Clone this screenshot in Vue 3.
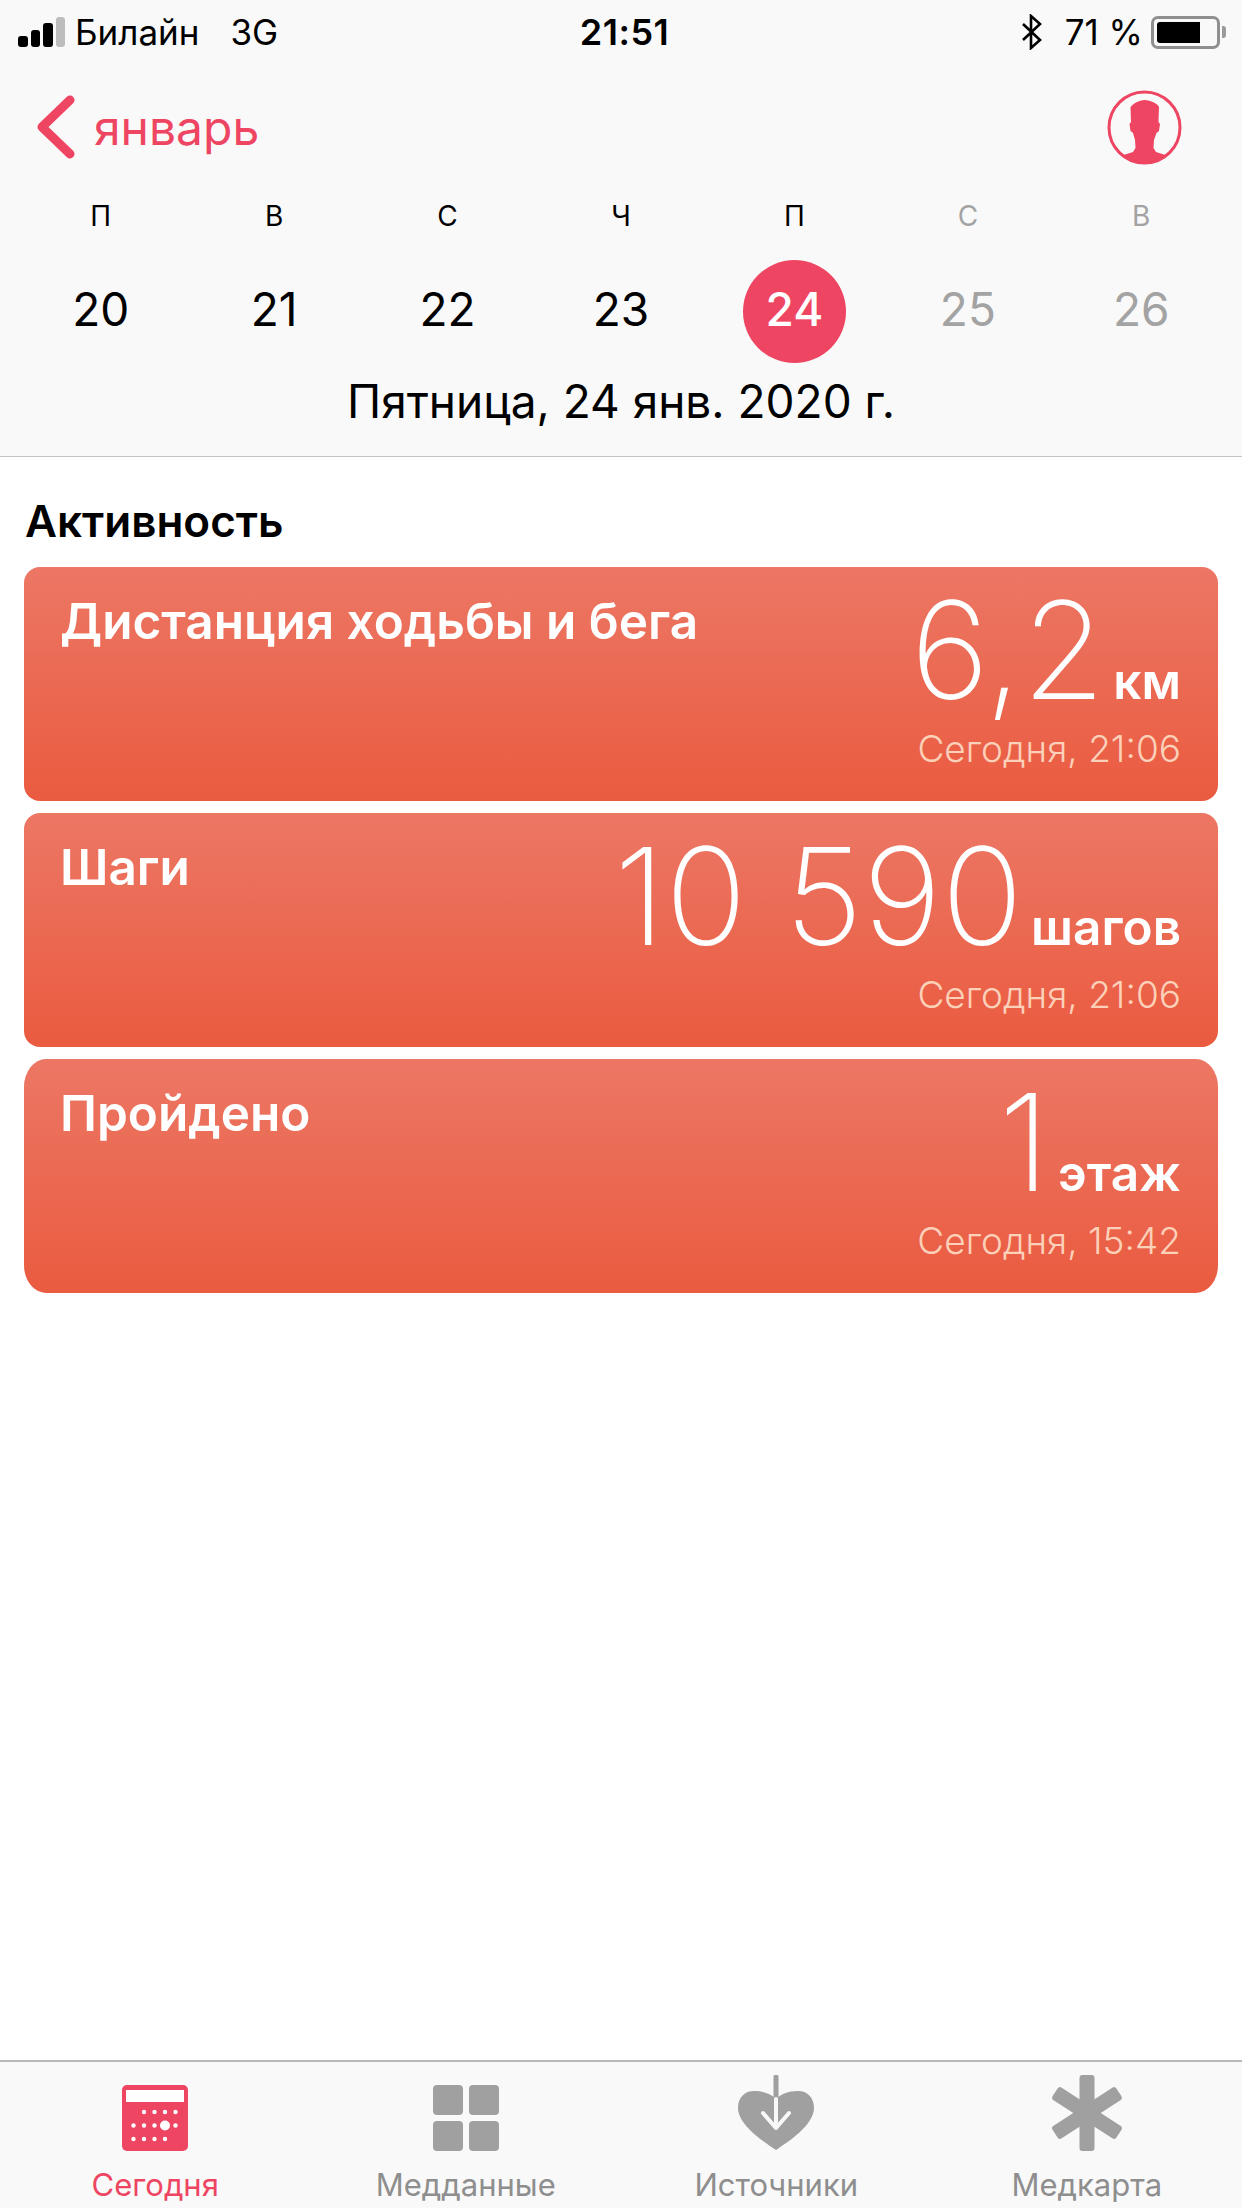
<script setup>
const week = [
  { letter: 'П', day: 20 },
  { letter: 'В', day: 21 },
  { letter: 'С', day: 22 },
  { letter: 'Ч', day: 23 },
  { letter: 'П', day: 24, today: true },
  { letter: 'С', day: 25, off: true },
  { letter: 'В', day: 26, off: true }
]

const cards = [
  { title: 'Дистанция ходьбы и бега', value: '6,2', unit: 'км', time: 'Сегодня, 21:06' },
  { title: 'Шаги', value: '10 590', unit: 'шагов', time: 'Сегодня, 21:06' },
  { title: 'Пройдено', value: '1', unit: 'этаж', time: 'Сегодня, 15:42' }
]

const dots = [
  { x: 22, y: 27 }, { x: 32.5, y: 27 }, { x: 43, y: 27 }, { x: 53.5, y: 27 },
  { x: 11.5, y: 40.5 }, { x: 22, y: 40.5 }, { x: 32.5, y: 40.5 }, { x: 53.5, y: 40.5 },
  { x: 11.5, y: 54 }, { x: 22, y: 54 }, { x: 32.5, y: 54 }, { x: 43, y: 54 }
]
</script>

<template>
  <div class="screen">
    <header class="top">
      <div class="status">
        <div class="status-left">
          <div class="signal">
            <i class="b1"></i><i class="b2"></i><i class="b3"></i><i class="b4"></i>
          </div>
          <span class="carrier">Билайн</span>
          <span class="net">3G</span>
        </div>
        <div class="clock">21:51</div>
        <div class="status-right">
          <svg class="bt" width="22" height="36" viewBox="0 0 22 36">
            <path d="M2 10 L19 26 L10 34 V2 L19 10 L2 26" fill="none" stroke="#000" stroke-width="2.6" />
          </svg>
          <span class="pct">71 %</span>
          <div class="battery"><div class="level"></div></div>
          <div class="tip"></div>
        </div>
      </div>

      <div class="nav">
        <div class="back">
          <svg width="40" height="64" viewBox="0 0 40 64">
            <path d="M34 5 L6 32 L34 59" fill="none" stroke="#ee4562" stroke-width="9" stroke-linecap="round" stroke-linejoin="round" />
          </svg>
          <span>январь</span>
        </div>
        <svg class="avatar" width="75" height="75" viewBox="0 0 75 75">
          <defs>
            <clipPath id="ring"><circle cx="37.5" cy="37.5" r="36" /></clipPath>
          </defs>
          <path clip-path="url(#ring)" fill="#ee4562" d="M37.5 10 C33 10.5 29 12 26 14.5 L23.5 17 L24 32 L22.5 34 L23.5 41 L26 43 L28 50 L28.5 58 L26 62 L15 65.5 L15 80 L60 80 L60 65.5 L49 62 L46.5 58 L47 50 L49.5 43 L52 41 L53 34 L51.5 32 L52 17 C50 13 44 10.5 37.5 10 Z" />
          <circle cx="37.5" cy="37.5" r="35.5" fill="none" stroke="#ee4562" stroke-width="3" />
        </svg>
      </div>

      <div class="week">
        <div v-for="d in week" :key="d.day" class="col" :class="{ off: d.off }">
          <div class="letter">{{ d.letter }}</div>
          <div class="day" :class="{ today: d.today }">{{ d.day }}</div>
        </div>
      </div>
      <div class="date">Пятница, 24 янв. 2020 г.</div>
    </header>

    <main class="content">
      <h2>Активность</h2>
      <div class="cards">
        <section v-for="c in cards" :key="c.title" class="card">
          <div class="card-title">{{ c.title }}</div>
          <div class="card-right">
            <div class="reading">
              <span class="value">{{ c.value }}</span>
              <span class="unit">{{ c.unit }}</span>
            </div>
            <div class="time">{{ c.time }}</div>
          </div>
        </section>
      </div>
    </main>

    <footer class="tabs">
      <div class="tab active">
        <div class="icon">
          <svg width="66" height="66" viewBox="0 0 66 66">
            <rect width="66" height="66" rx="5" fill="#ee4562" />
            <rect x="4" y="5" width="58" height="12" fill="#fff" />
            <circle v-for="(p, i) in dots" :key="i" :cx="p.x" :cy="p.y" r="2.2" fill="#fff" />
            <circle cx="43" cy="40.5" r="5" fill="#fff" />
          </svg>
        </div>
        <span>Сегодня</span>
      </div>
      <div class="tab">
        <div class="icon">
          <svg width="66" height="66" viewBox="0 0 66 66" fill="#a0a0a0">
            <rect width="30" height="30" rx="4" />
            <rect x="36" width="30" height="30" rx="4" />
            <rect y="36" width="30" height="30" rx="4" />
            <rect x="36" y="36" width="30" height="30" rx="4" />
          </svg>
        </div>
        <span>Медданные</span>
      </div>
      <div class="tab">
        <div class="icon">
          <svg width="76" height="76" viewBox="0 0 76 76">
            <path fill="#a0a0a0" d="M38 75 C26 67 0 50 0 33 C0 22 7 16 16 16 C26 16 33 19 38 24 C43 19 50 16 60 16 C69 16 76 22 76 33 C76 50 50 67 38 75 Z" />
            <path d="M38 2 V22" stroke="#a0a0a0" stroke-width="5" stroke-linecap="round" />
            <path d="M38 24 V52 M25 38 L38 53 L51 38" fill="none" stroke="#f9f9f9" stroke-width="4" stroke-linecap="round" stroke-linejoin="round" />
          </svg>
        </div>
        <span>Источники</span>
      </div>
      <div class="tab">
        <div class="icon">
          <svg width="72" height="76" viewBox="0 0 72 76" fill="#a0a0a0">
            <rect x="28.5" width="15" height="76" rx="3" />
            <rect x="28.5" width="15" height="76" rx="3" transform="rotate(57 36 38)" />
            <rect x="28.5" width="15" height="76" rx="3" transform="rotate(-57 36 38)" />
          </svg>
        </div>
        <span>Медкарта</span>
      </div>
    </footer>
  </div>
</template>

<style scoped>
.screen {
  width: 1242px;
  height: 2208px;
  display: flex;
  flex-direction: column;
  overflow: hidden;
  background: #fff;
  color: #000;
  font-family: Inter, Roboto, "Liberation Sans", sans-serif;
}

.top {
  height: 457px;
  box-sizing: border-box;
  background: #f9f9f9;
  border-bottom: 1px solid #c4c4c6;
}

.status {
  height: 64px;
  padding: 0 16px 0 18px;
  display: grid;
  grid-template-columns: 1fr auto 1fr;
  align-items: center;
  font-size: 35px;
}

.status-left {
  display: flex;
  align-items: center;
}

.signal {
  display: flex;
  align-items: flex-end;
  gap: 3px;
  margin-right: 10px;
}

.signal i {
  display: block;
  width: 9.5px;
  border-radius: 3px;
  background: #000;
}

.signal .b1 { height: 11px; }
.signal .b2 { height: 17px; }
.signal .b3 { height: 24px; }
.signal .b4 { height: 30px; background: #bdbdbd; }

.net {
  margin-left: 31px;
}

.clock {
  margin-left: 5px;
  font-weight: 600;
  font-size: 36px;
  letter-spacing: 0.5px;
}

.status-right {
  display: flex;
  align-items: center;
  justify-content: flex-end;
}

.pct {
  margin-left: 22px;
  margin-right: 8px;
}

.battery {
  width: 69px;
  height: 33px;
  box-sizing: border-box;
  border: 3px solid #8f8f8f;
  border-radius: 7px;
  padding: 3px;
}

.level {
  width: 75%;
  height: 100%;
  background: #000;
  border-radius: 3px 0 0 3px;
}

.tip {
  width: 4px;
  height: 12px;
  margin-left: 2px;
  background: #9a9a9a;
  border-radius: 0 3px 3px 0;
}

.nav {
  height: 126px;
  padding: 0 60px 0 36px;
  display: flex;
  align-items: center;
  justify-content: space-between;
}

.back {
  display: flex;
  align-items: center;
  gap: 18px;
  color: #ee4562;
  font-size: 48px;
}

.week {
  display: grid;
  grid-template-columns: repeat(7, 1fr);
  padding: 8px 14px 0;
}

.col {
  display: flex;
  flex-direction: column;
  align-items: center;
}

.col.off {
  color: #a3a3a3;
}

.letter {
  font-size: 28px;
  line-height: 36px;
}

.day {
  width: 103px;
  height: 103px;
  margin-top: 26px;
  padding-bottom: 6px;
  box-sizing: border-box;
  border-radius: 50%;
  display: flex;
  align-items: center;
  justify-content: center;
  font-size: 46px;
}

.day.today {
  background: #ee4562;
  color: #fff;
  font-weight: 500;
}

.date {
  margin-top: 11px;
  text-align: center;
  font-size: 46px;
  line-height: 54px;
}

.content {
  flex: 1;
  padding: 0 24px;
}

h2 {
  margin: 39px 0 0 1px;
  font-size: 44px;
  line-height: 50px;
  font-weight: 600;
}

.cards {
  margin-top: 21px;
  display: flex;
  flex-direction: column;
  gap: 12px;
}

.card {
  height: 234px;
  box-sizing: border-box;
  padding: 24px 37px 0 36px;
  display: flex;
  justify-content: space-between;
  border-radius: 16px;
  background: linear-gradient(#ec7764, #ea5b40);
  color: #fff;
}

.card:last-child {
  border-radius: 22px / 28px;
}

.card-title {
  font-size: 49.5px;
  line-height: 60px;
  font-weight: 600;
}

.card-right {
  display: flex;
  flex-direction: column;
  align-items: flex-end;
}

.reading {
  display: flex;
  align-items: baseline;
  gap: 8px;
  height: 126px;
  margin-top: -4px;
}

.value {
  font-size: 135px;
  line-height: 126px;
  font-weight: 250;
}

.unit {
  font-size: 49.5px;
  font-weight: 600;
}

.time {
  margin-top: 14px;
  font-size: 37px;
  line-height: 44px;
  font-weight: 300;
  color: #fcd0b9;
}

.tabs {
  height: 148px;
  box-sizing: border-box;
  background: #f9f9f9;
  border-top: 2px solid #b8b8b8;
  display: grid;
  grid-template-columns: repeat(4, 1fr);
}

.tab {
  display: flex;
  flex-direction: column;
  align-items: center;
  color: #8e8e8e;
  font-size: 31px;
}

.tab.active {
  color: #ee4562;
}

.icon {
  height: 89px;
  display: flex;
  align-items: flex-end;
  justify-content: center;
}

.tab span {
  line-height: 38px;
  margin-top: 15px;
}
</style>
